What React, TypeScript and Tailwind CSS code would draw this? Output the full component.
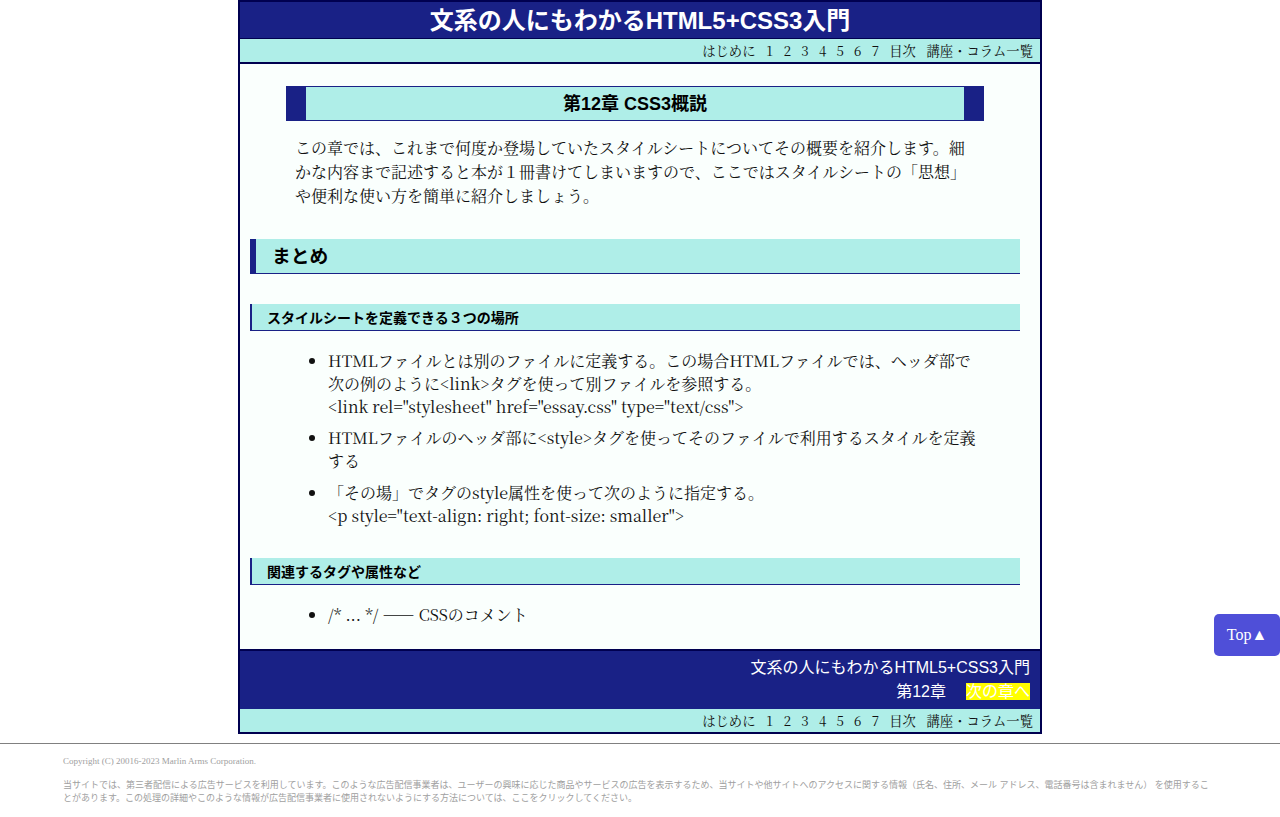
function Nav() {
  return (
    <div className="h-[23px] bg-[#afeee8] flex justify-end items-center gap-[10.6px] pr-[7px] text-[13.33px] leading-[23px] text-[#111111] font-['Noto_Serif_CJK_JP',serif]">
      <span>はじめに</span>
      {["1", "2", "3", "4", "5", "6", "7"].map((n) => (
        <span key={n} className="w-[7px] text-center">{n}</span>
      ))}
      <span>目次</span>
      <span>講座・コラム一覧</span>
    </div>
  );
}

export default function App() {
  return (
    <div className="bg-white min-h-[817px] relative overflow-hidden font-['Noto_Serif_CJK_JP',serif]">
      <div className="w-[804px] mx-auto border-2 border-[#000050] bg-[#fafffd]">
        <h1 className="h-[36px] bg-[#192186] border-b-2 border-[#000050] box-content -mb-px text-center text-white text-[24px] leading-[38px] font-bold font-['Liberation_Sans','Noto_Sans_CJK_JP',sans-serif]">
          文系の人にもわかるHTML5+CSS3入門
        </h1>
        <div className="border-b-2 border-[#000050]"><Nav /></div>
        <div className="pt-[22px] pb-[23px] pl-[10px] pr-[20px] text-[16px] leading-[24px] text-[#111111]">
          <h2 className="mx-[36px] h-[35px] bg-[#afeee8] border-x-[20px] border-y border-[#192186] text-center text-black text-[18px] leading-[34px] font-bold font-['Liberation_Sans','Noto_Sans_CJK_JP',sans-serif]">
            第12章 CSS3概説
          </h2>
          <p className="mt-[15px] mb-[31px] ml-[45px] mr-[55px]">
            この章では、これまで何度か登場していたスタイルシートについてその概要を紹介します。細かな内容まで記述すると本が１冊書けてしまいますので、ここではスタイルシートの「思想」や便利な使い方を簡単に紹介しましょう。
          </p>
          <h3 className="h-[35px] bg-[#afeee8] border-l-[6px] border-b border-[#192186] pl-[16px] text-black text-[18.72px] leading-[35px] font-bold font-['Liberation_Sans','Noto_Sans_CJK_JP',sans-serif]">
            まとめ
          </h3>
          <h4 className="mt-[30px] h-[27px] bg-[#afeee8] border-l-2 border-b border-[#192186] pl-[15px] text-black text-[14px] leading-[28px] font-bold font-['Liberation_Sans','Noto_Sans_CJK_JP',sans-serif]">
            スタイルシートを定義できる３つの場所
          </h4>
          <ul className="mt-[18px] ml-[78px] mr-[44px] list-disc leading-[23px]">
            <li>HTMLファイルとは別のファイルに定義する。この場合HTMLファイルでは、ヘッダ部で次の例のように&lt;link&gt;タグを使って別ファイルを参照する。<br />&lt;link rel="stylesheet" href="essay.css" type="text/css"&gt;</li>
            <li className="mt-[8px]">HTMLファイルのヘッダ部に&lt;style&gt;タグを使ってそのファイルで利用するスタイルを定義する</li>
            <li className="mt-[9px]">「その場」でタグのstyle属性を使って次のように指定する。<br />&lt;p style="text-align: right; font-size: smaller"&gt;</li>
          </ul>
          <h4 className="mt-[31px] h-[27px] bg-[#afeee8] border-l-2 border-b border-[#192186] pl-[15px] text-black text-[14px] leading-[28px] font-bold font-['Liberation_Sans','Noto_Sans_CJK_JP',sans-serif]">
            関連するタグや属性など
          </h4>
          <ul className="mt-[18px] ml-[78px] mr-[44px] list-disc leading-[23px]">
            <li>/* ... */ ―― CSSのコメント</li>
          </ul>
        </div>
        <div className="border-t-2 border-[#000050] h-[60px] bg-[#192186] text-white text-right pr-[10px] pt-[5px] text-[16px] leading-[24px] font-['Liberation_Sans','Noto_Sans_CJK_JP',sans-serif]">
          <div>文系の人にもわかるHTML5+CSS3入門</div>
          <div>第12章<span className="ml-[20px] bg-[#ffff00]">次の章へ</span></div>
        </div>
        <Nav />
      </div>
      <div className="mt-[9px] border-t border-[#808080] pt-[11px] px-[63px] text-[9px] leading-[13px] text-[#a0a0a0]">
        <p className="font-['Liberation_Serif',serif]">Copyright (C) 20016-2023 Marlin Arms Corporation.</p>
        <p className="mt-[11px] font-['Liberation_Sans','Noto_Sans_CJK_JP',sans-serif]">
          当サイトでは、第三者配信による広告サービスを利用しています。このような広告配信事業者は、ユーザーの興味に応じた商品やサービスの広告を表示するため、当サイトや他サイトへのアクセスに関する情報（氏名、住所、メール アドレス、電話番号は含まれません） を使用することがあります。この処理の詳細やこのような情報が広告配信事業者に使用されないようにする方法については、ここをクリックしてください。
        </p>
      </div>
      <button className="fixed right-0 top-[614px] w-[66px] h-[42px] bg-[#4f4fd8] text-white rounded-[5px] text-[16px] font-['Liberation_Serif',serif]">Top▲</button>
    </div>
  );
}
